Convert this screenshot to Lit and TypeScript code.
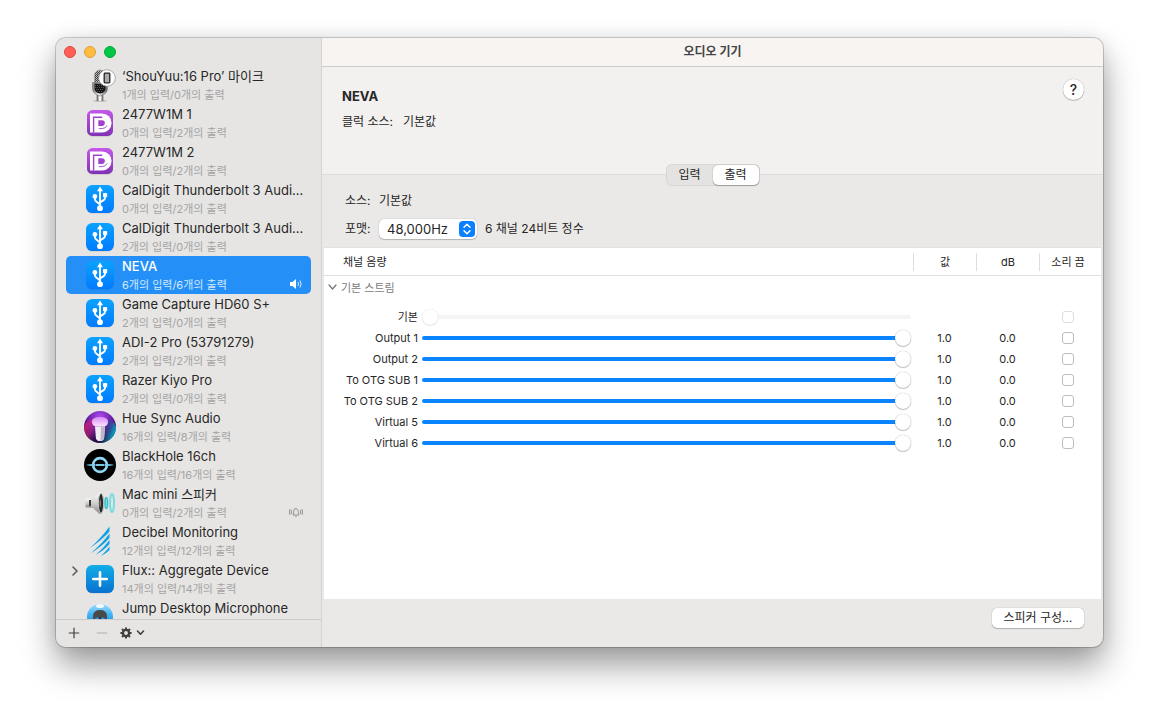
import { LitElement, html, css, svg, nothing } from "lit";
import { customElement, property, state } from "lit/decorators.js";
import { classMap } from "lit/directives/class-map.js";

type IconName =
  | "mic" | "displayport" | "usb" | "hue" | "blackhole"
  | "speaker" | "decibel" | "aggregate" | "jump";

interface Device {
  name: string;
  io?: string;
  icon: IconName;
  status?: "output" | "alert";
  expandable?: boolean;
}

interface Channel {
  id: string;
  label: string;
  level: number;
  value?: string;
  db?: string;
}

const DEVICES: Device[] = [
  { name: "‘ShouYuu:16 Pro’ 마이크", io: "1개의 입력/0개의 출력", icon: "mic" },
  { name: "2477W1M 1", io: "0개의 입력/2개의 출력", icon: "displayport" },
  { name: "2477W1M 2", io: "0개의 입력/2개의 출력", icon: "displayport" },
  { name: "CalDigit Thunderbolt 3 Audi…", io: "0개의 입력/2개의 출력", icon: "usb" },
  { name: "CalDigit Thunderbolt 3 Audi…", io: "2개의 입력/0개의 출력", icon: "usb" },
  { name: "NEVA", io: "6개의 입력/6개의 출력", icon: "usb", status: "output" },
  { name: "Game Capture HD60 S+", io: "2개의 입력/0개의 출력", icon: "usb" },
  { name: "ADI-2 Pro (53791279)", io: "2개의 입력/2개의 출력", icon: "usb" },
  { name: "Razer Kiyo Pro", io: "2개의 입력/0개의 출력", icon: "usb" },
  { name: "Hue Sync Audio", io: "16개의 입력/8개의 출력", icon: "hue" },
  { name: "BlackHole 16ch", io: "16개의 입력/16개의 출력", icon: "blackhole" },
  { name: "Mac mini 스피커", io: "0개의 입력/2개의 출력", icon: "speaker", status: "alert" },
  { name: "Decibel Monitoring", io: "12개의 입력/12개의 출력", icon: "decibel" },
  { name: "Flux:: Aggregate Device", io: "14개의 입력/14개의 출력", icon: "aggregate", expandable: true },
  { name: "Jump Desktop Microphone", icon: "jump" },
];

const CHANNELS: Channel[] = [
  { id: "master", label: "기본", level: 0 },
  { id: "out1", label: "Output 1", level: 1, value: "1.0", db: "0.0" },
  { id: "out2", label: "Output 2", level: 1, value: "1.0", db: "0.0" },
  { id: "otg1", label: "To OTG SUB 1", level: 1, value: "1.0", db: "0.0" },
  { id: "otg2", label: "To OTG SUB 2", level: 1, value: "1.0", db: "0.0" },
  { id: "virtual5", label: "Virtual 5", level: 1, value: "1.0", db: "0.0" },
  { id: "virtual6", label: "Virtual 6", level: 1, value: "1.0", db: "0.0" },
];

const FONT = css`Inter, "Noto Sans CJK KR", sans-serif`;

const ICONS = {
  usb: svg`
    <defs><linearGradient id="g" x2="0" y2="1"><stop stop-color="#0ba2ff"/><stop offset="1" stop-color="#007bff"/></linearGradient></defs>
    <rect x="2" y="2.6" width="28" height="28" rx="6.4" fill="#000" opacity=".13"/>
    <rect x="2" y="2" width="28" height="28" rx="6.4" fill="url(#g)"/>
    <g fill="none" stroke="#fff" stroke-width="1.9"><path d="M16 7v17M11 14v2.2q0 1.5 1.3 2.3L16 21.4M21 12.8v2q0 1.5-1.3 2.3L16 19.4"/></g>
    <g fill="#fff"><path d="M16 3.6l3 4.6h-6z"/><circle cx="16" cy="25.2" r="2.9"/><circle cx="10.9" cy="13.4" r="2.4"/><rect x="19" y="10" width="4.2" height="4.2" rx=".8"/></g>`,
  displayport: svg`
    <defs><linearGradient id="g" x2="0" y2="1"><stop stop-color="#c557ea"/><stop offset="1" stop-color="#8131b4"/></linearGradient></defs>
    <rect x="3" y="3.6" width="26" height="26" rx="5.6" fill="#000" opacity=".2"/>
    <rect x="3" y="3" width="26" height="26" rx="5.6" fill="url(#g)"/>
    <path d="M6 6.6h12.2a9.4 9.4 0 0 1 0 18.800H6z" fill="#fff"/>
    <path d="M9.600 25.500V10.300h8.600" fill="none" stroke="#a043cc" stroke-width="1.400"/>
    <path d="M14.300 13.300h3.700a2.800 2.800 0 0 1 0 5.600h-3.700z" fill="#a043cc"/><path d="M14.900 21.600h3q4 0 5.200-3.200" fill="none" stroke="#a043cc" stroke-width=".9"/>`,
  mic: svg`
    <defs>
      <pattern id="m" width="2" height="2" patternUnits="userSpaceOnUse"><rect width="2" height="2" fill="#444"/><rect width="1" height="1" fill="#c5c5c5"/><rect x="1" y="1" width="1" height="1" fill="#999"/></pattern>
      <linearGradient id="s"><stop stop-color="#777"/><stop offset=".4" stop-color="#f4f4f4"/><stop offset="1" stop-color="#666"/></linearGradient>
    </defs>
    <ellipse cx="16" cy="32" rx="7" ry="1" fill="#c2c2c2"/>
    <path d="M13.5 26v6M18.5 26v6" stroke="#777" stroke-width="1.8"/><path d="M16 26v6" stroke="#f2f2f2" stroke-width="2"/>
    <rect x="10.5" y="1" width="11" height="17" rx="5.5" fill="url(#m)" stroke="#999" stroke-width=".7"/>
    <path d="M8.5 13.5h15v6q0 4-3.5 5.7l-4 1.8-4-1.8q-3.5-1.7-3.5-5.7z" fill="url(#s)" stroke="#777" stroke-width=".6"/>
    <path d="M10.5 14.5h11v5q0 4.2-5.5 5-5.5-.8-5.5-5z" fill="#151515"/>
    <path d="M11 16.5h10M11 18.5h10M12 20.5h8M13 22.5h6" stroke="#888" stroke-width=".6" stroke-dasharray="1 1"/>
    <circle cx="23" cy="9" r="8.3" fill="#fff" stroke="#8c8c8c" stroke-width=".7"/>
    <rect x="20.2" y="4.2" width="5.6" height="9.6" rx=".8" fill="#aaa" stroke="#222" stroke-width="1.3"/>`,
  hue: svg`
    <defs>
      <radialGradient id="g" cx=".5" cy=".2" r=".8"><stop stop-color="#b04cf0"/><stop offset=".45" stop-color="#6a22a8"/><stop offset="1" stop-color="#1b0b38"/></radialGradient>
      <linearGradient id="l" x2="1" y2=".3"><stop stop-color="#ff1f6a" stop-opacity=".75"/><stop offset=".35" stop-color="#d02080" stop-opacity=".5"/><stop offset=".6" stop-color="#201050" stop-opacity="0"/><stop offset="1" stop-color="#00b5c8" stop-opacity=".8"/></linearGradient>
      <linearGradient id="b" x2="0" y2="1"><stop stop-color="#d98af8"/><stop offset="1" stop-color="#fbe6ff"/></linearGradient>
    </defs>
    <circle cx="16" cy="16" r="16" fill="url(#g)"/><path d="M0 16a16 16 0 0 0 32 0q-3-9-16-9T0 16z" fill="url(#l)"/>
    <path d="M8 10.5q0-4.500 8-4.500t8 4.500q0 3.800-3.500 5h-9Q8 14.300 8 10.500z" fill="url(#b)"/>
    <path d="M11 15.5h10l-1 12.500-2 2h-4l-2-2z" fill="#f0ecf4"/><path d="M17 15.500h4l-1 12.500-2 2h-1.500z" fill="#bdb8c6"/>`,
  blackhole: svg`
    <circle cx="16" cy="16" r="16" fill="#000"/>
    <circle cx="16" cy="16" r="6.9" fill="none" stroke="#90d8f5" stroke-width="2.6"/>
    <path d="M1.5 16q5-1.3 10-1h9q5-.3 10 1-5 1.3-10 1h-9q-5 .3-10-1z" fill="#78cdf2"/>
    <circle cx="16" cy="16" r="5" fill="#000"/><path d="M11.5 16h9" stroke="#8ed8f5" stroke-width="1.8"/>`,
  speaker: svg`
    <defs><linearGradient id="s" x2="0" y2="1"><stop stop-color="#fafafa"/><stop offset=".5" stop-color="#cfcfcf"/><stop offset="1" stop-color="#858585"/></linearGradient></defs>
    <path d="M6 11.5h3L15 6q1.500-.8 2.500 0v20.600q-1 .8-2.500 0L9 21H6z" fill="url(#s)"/>
    <rect x="1.5" y="11.5" width="5.5" height="9" rx="1.2" fill="url(#s)"/><rect x="5" y="13" width="2" height="6" fill="#3a3a3a"/>
    <ellipse cx="17" cy="16.3" rx="2.600" ry="10" fill="#292929" stroke="#c4c4c4" stroke-width="1"/>
    <ellipse cx="16.200" cy="16.300" rx=".9" ry="4" fill="#777"/>
    <ellipse cx="22.3" cy="16" rx="1.3" ry="5.6" fill="#8adfe3" stroke="#38c2c8" stroke-width="1.5"/>
    <ellipse cx="28" cy="16" rx="2" ry="9" fill="none" stroke="#79dde2" stroke-width="2"/>`,
  decibel: svg`
    <g fill="#13a0e4"><path d="M25.5 1.500Q18 12 5.500 23.500 19 14 25.500 6.500z"/><path d="M25.500 8.500Q18 18.500 6.500 28.500 19 20.500 25.500 13z"/><path d="M25.500 15Q20 22.500 11.500 30 20.500 25 25.500 19z"/><path d="M25.500 21.500Q22 26.500 17 31 22.500 28.500 25.500 25z"/></g>`,
  aggregate: svg`
    <defs><linearGradient id="g" x2="0" y2="1"><stop stop-color="#12ade8"/><stop offset="1" stop-color="#0872cf"/></linearGradient></defs>
    <rect x="2" y="2.6" width="28" height="28" rx="6.4" fill="#000" opacity=".12"/>
    <rect x="2" y="2" width="28" height="28" rx="6.4" fill="url(#g)"/>
    <path d="M16 9.3v13.4M9.3 16h13.4" stroke="#fff" stroke-width="2.6" stroke-linecap="round"/>`,
  jump: svg`
    <defs><linearGradient id="g" x2="0" y2="1"><stop stop-color="#9fdcfb"/><stop offset=".4" stop-color="#40b4f5"/><stop offset="1" stop-color="#1478d8"/></linearGradient></defs>
    <circle cx="16" cy="16" r="13" fill="url(#g)"/><ellipse cx="16" cy="5" rx="4" ry="2" fill="#fff" opacity=".85"/>
    <path d="M9 20v-5.500Q9.500 9 16 9t7 5.500V20z" fill="#4a4a4a"/><path d="M11.500 17q4.500-2 9 0v3h-9z" fill="#1d9cf0"/><path d="M14.500 16h3v4h-3z" fill="#333"/>`,
};

@customElement("device-icon")
class DeviceIcon extends LitElement {
  static styles = css`
    :host { display: block; width: 32px; height: 32px; }
    svg { display: block; width: 32px; height: 32px; overflow: visible; }
  `;
  @property() name: IconName = "usb";
  render() {
    return html`<svg viewBox="0 0 32 32" aria-hidden="true">${ICONS[this.name]}</svg>`;
  }
}

@customElement("device-row")
class DeviceRow extends LitElement {
  static styles = css`
    :host { display: block; }
    .row {
      display: grid;
      grid-template-columns: 18px 1fr;
      grid-template-rows: 38px;
      margin: 0 10px;
      border-radius: 5px;
    }
    .row.selected { background: #2490f7; }
    button {
      border: 0; padding: 0; background: none; color: inherit;
      font-family: ${FONT}; text-align: left;
    }
    .disclosure { grid-column: 1; height: 22px; display: grid; place-items: center; }
    .disclosure svg { width: 8px; height: 10px; }
    .device {
      grid-column: 2;
      display: flex; align-items: center; gap: 6px;
      min-width: 0; padding-right: 8px;
    }
    .text { box-sizing: border-box; flex: 1; min-width: 0; height: 38px; padding-top: 1px; }
    .name, .io { display: block; white-space: nowrap; }
    .name { font-size: 13px; line-height: 18px; color: #272727; }
    .io { font-size: 11px; line-height: 20px; color: #a5a4a3; }
    .selected .name { color: #fff; font-weight: 500; }
    .selected .io { color: #d4e8fd; }
    .status { width: 14px; height: 12px; align-self: flex-end; padding-bottom: 4px; }
  `;
  @property({ attribute: false }) device!: Device;
  @property({ type: Boolean }) selected = false;

  private status(kind?: string) {
    if (kind === "output") {
      return html`<svg class="status" viewBox="0 0 14 12" aria-hidden="true">
        <path d="M1 4h2.500L7 1v10L3.500 8H1z" fill="#fff"/>
        <path d="M9 4q1 2 0 4M11 2.500q2.200 3.500 0 7" fill="none" stroke="#d4e8fd" stroke-width="1"/></svg>`;
    }
    if (kind === "alert") {
      return html`<svg class="status" viewBox="0 0 14 12" aria-hidden="true" fill="none" stroke="#8a8988" stroke-width=".9">
        <path d="M3.800 9h6.400Q9.200 8 9.200 5.500T7 2.500 4.800 5.500 3.800 9zM6.200 10.300h1.600M2.700 4q-.8 2 0 4M11.300 4q.8 2 0 4M1 3q-1 3 0 6M13 3q1 3 0 6"/></svg>`;
    }
    return nothing;
  }

  render() {
    const d = this.device;
    return html`
      <div class=${classMap({ row: true, selected: this.selected })}>
        ${d.expandable
          ? html`<button class="disclosure" aria-label="펼치기"><svg viewBox="0 0 8 10"><path d="M2 1l4 4-4 4" fill="none" stroke="#555" stroke-width="1.5" stroke-linecap="round" stroke-linejoin="round"/></svg></button>`
          : nothing}
        <button class="device" aria-pressed=${this.selected ? "true" : "false"}>
          <device-icon name=${d.icon}></device-icon>
          <span class="text">
            <span class="name">${d.name}</span>
            ${d.io ? html`<span class="io">${d.io}</span>` : nothing}
          </span>
          ${this.status(d.status)}
        </button>
      </div>`;
  }
}

@customElement("channel-table")
class ChannelTable extends LitElement {
  static styles = css`
    :host { display: block; background: #fff; font-family: ${FONT}; font-size: 11px; color: #262626; overflow: hidden; border-top: 1px solid #e2e1e0; }
    table { width: 100%; border-collapse: collapse; table-layout: fixed; }
    th, td { padding: 0; text-align: center; font-weight: 400; }
    thead th { height: 27px; border-bottom: 1px solid #e0e0e0; }
    thead span { display: block; line-height: 18px; border-left: 1px solid #dedede; }
    thead th:first-child span { border-left: 0; text-align: left; padding-left: 19px; }
    .c-label { width: 98px; }
    .c-num { width: 63px; }
    .c-mute { width: 62px; }
    .group th { height: 30px; text-align: left; vertical-align: top; color: #7b7b7b; }
    .group button {
      display: flex; align-items: center; gap: 4px; height: 22px; padding: 0 0 0 4px;
      border: 0; background: none; font: inherit; color: inherit;
    }
    .group svg { width: 9px; height: 6px; }
    tbody td, .channel th { height: 21px; line-height: 16px; }
    .channel th { text-align: right; padding-right: 4px; white-space: nowrap; }
    .slider { padding-right: 2px; }
    input { display: block; margin: 0; appearance: none; -webkit-appearance: none; }
    input[type="range"] { width: 100%; height: 16px; background: none; }
    input[type="range"]::-webkit-slider-runnable-track { height: 4px; border-radius: 2px; background: #0a84ff; }
    input[type="range"]:disabled::-webkit-slider-runnable-track { background: #f5f5f5; }
    input[type="range"]::-webkit-slider-thumb {
      -webkit-appearance: none; width: 16px; height: 16px; margin-top: -6px;
      border-radius: 50%; background: #fff; box-shadow: 0 0 1px rgba(0,0,0,.35), 0 1px 1px rgba(0,0,0,.22);
    }
    input[type="range"]:disabled::-webkit-slider-thumb { box-shadow: 0 0 1px rgba(0,0,0,.2), 0 1px 1px rgba(0,0,0,.08); }
    input[type="checkbox"] {
      box-sizing: border-box; width: 12px; height: 12px; margin: 0 auto;
      border: 1px solid #bdbdbd; border-radius: 3px; background: #fff;
    }
    input[type="checkbox"]:checked { background: #0a84ff; border-color: #0a84ff; }
    input[type="checkbox"]:disabled { border-color: #dedede; }
    .mute { padding-right: 5px; }
    thead .mute { padding-right: 0; }
    thead .mute span { padding-right: 5px; }
  `;

  render() {
    return html`
      <table>
        <colgroup><col class="c-label"><col><col class="c-num"><col class="c-num"><col class="c-mute"></colgroup>
        <thead><tr>
          <th colspan="2" scope="col"><span>채널 음량</span></th>
          <th scope="col"><span>값</span></th>
          <th scope="col"><span>dB</span></th>
          <th scope="col" class="mute"><span>소리 끔</span></th>
        </tr></thead>
        <tbody>
          <tr class="group"><th colspan="5"><button>
            <svg viewBox="0 0 9 6" aria-hidden="true"><path d="M1 1l3.5 4L8 1" fill="none" stroke="#777" stroke-width="1.3" stroke-linecap="round" stroke-linejoin="round"/></svg>
            기본 스트림</button></th></tr>
          ${CHANNELS.map((c) => {
            const off = c.value === undefined;
            return html`<tr class="channel">
              <th scope="row"><label for=${c.id}>${c.label}</label></th>
              <td class="slider"><input id=${c.id} type="range" min="0" max="1" step="0.01" .value=${String(c.level)} ?disabled=${off}></td>
              <td>${c.value ?? nothing}</td>
              <td>${c.db ?? nothing}</td>
              <td class="mute"><input type="checkbox" aria-label="소리 끔" ?disabled=${off}></td>
            </tr>`;
          })}
        </tbody>
      </table>`;
  }
}

@customElement("app-root")
class AppRoot extends LitElement {
  static styles = css`
    :host {
      display: flex; box-sizing: border-box; height: 100vh;
      padding: 38px 56px 74px; background: #fff;
      font-family: ${FONT}; font-size: 12px; color: #262626;
    }
    * { box-sizing: border-box; }
    .window {
      flex: 1; min-width: 0; display: grid; grid-template-columns: 266px 1fr;
      border-radius: 10px; overflow: hidden; background: #eae9e7;
      box-shadow: 0 0 0 1px rgba(0,0,0,.18), 0 18px 34px rgba(0,0,0,.4), 0 0 16px rgba(0,0,0,.08);
    }
    button, select { font-family: inherit; color: inherit; }
    .sidebar { display: flex; flex-direction: column; min-height: 0; background: #e6e5e3; border-right: 1px solid #d4d3d1; }
    .lights { display: flex; gap: 8px; padding: 8px; }
    .light { width: 12px; height: 12px; padding: 0; border: 1px solid; border-radius: 50%; }
    .close { background: #ff5f57; border-color: #e14640; }
    .minimize { background: #febc40; border-color: #dfa033; }
    .zoom { background: #02c645; border-color: #02ab34; }
    .devices { flex: 1; min-height: 0; margin: 0; padding: 0; list-style: none; overflow-y: auto; scrollbar-width: none; }
    .tools { display: flex; align-items: center; justify-content: flex-start; height: 28px; border-top: 1px solid #cbcac8; padding: 0 12px 2px; }
    .tools button { display: flex; align-items: center; gap: 4px; padding: 0; margin-right: 16px; border: 0; background: none; color: #3f3f3f; }
    .tools button:disabled { color: #b0afae; margin-right: 12px; }
    .tools svg { display: block; }
    .main { display: flex; flex-direction: column; min-width: 0; min-height: 0; }
    .titlebar { height: 29px; background: #f7f4f2; border-bottom: 1px solid #cfcdcb; display: grid; place-items: center; }
    .titlebar h1 { margin: 0; font-size: 12px; line-height: 20px; font-weight: 600; color: #444; }
    .summary { display: flex; justify-content: space-between; align-items: flex-start; height: 107px; padding: 12px 19px 0 20px; background: #f2f1ef; }
    .summary h2 { margin: 7px 0 8px; font-size: 13px; line-height: 20px; font-weight: 700; }
    .clock { display: flex; gap: 10px; margin: 0; line-height: 16px; }
    .help { width: 21px; height: 21px; padding: 0; border: 0; border-radius: 50%; background: #fff; font-size: 14px; font-weight: 500; line-height: 21px; box-shadow: 0 0 1px rgba(0,0,0,.4), 0 1px 1px rgba(0,0,0,.2); }
    .panel { flex: 1; min-height: 0; display: flex; flex-direction: column; padding: 0 2px; border-top: 1px solid #dddcda; }
    .segments { display: flex; align-self: center; height: 22px; margin-top: -11px; padding: 0 1px; background: #e4e3e1; border-radius: 6px; box-shadow: inset 0 0 0 1px #d8d7d5; }
    .segments button { width: 46px; height: 20px; margin: 1px 0; padding: 0; border: 0; border-radius: 5px; background: none; font-size: 12px; line-height: 20px; }
    .segments .active { background: #fff; box-shadow: 0 0 1px rgba(0,0,0,.4), 0 1px 1px rgba(0,0,0,.25); }
    .settings { display: grid; grid-template-columns: 34px 1fr; align-items: center; row-gap: 8px; padding: 5px 21px 8px; }
    .settings > * { line-height: 20px; }
    .format { display: flex; align-items: center; gap: 8px; }
    .picker { position: relative; display: block; height: 20px; }
    .picker select {
      appearance: none; -webkit-appearance: none; display: block; width: 98px; height: 20px; padding: 0 22px 0 8px;
      border: 0; border-radius: 5px; background: #fff; font-size: 13px; line-height: 20px;
      box-shadow: 0 0 1px rgba(0,0,0,.4), 0 1px 1px rgba(0,0,0,.2);
    }
    .picker svg { position: absolute; top: 2px; right: 2px; width: 16px; height: 16px; pointer-events: none; }
    channel-table { flex: 1; min-height: 0; }
    .actions { display: flex; justify-content: flex-end; height: 48px; padding: 9px 17px 0; }
    .actions button { height: 20px; width: 92px; padding: 0; border: 0; border-radius: 5px; background: #fff; font-size: 12px; line-height: 18px; box-shadow: 0 0 1px rgba(0,0,0,.4), 0 1px 1px rgba(0,0,0,.22); }
  `;

  @state() private selected = 5;
  @state() private direction: "in" | "out" = "out";

  render() {
    return html`
      <div class="window">
        <aside class="sidebar">
          <div class="lights">
            <button class="light close" aria-label="닫기"></button>
            <button class="light minimize" aria-label="최소화"></button>
            <button class="light zoom" aria-label="확대"></button>
          </div>
          <ul class="devices">
            ${DEVICES.map((d, i) => html`<li><device-row .device=${d} ?selected=${i === this.selected} @click=${() => (this.selected = i)}></device-row></li>`)}
          </ul>
          <div class="tools">
            <button aria-label="추가"><svg width="12" height="12" viewBox="0 0 12 12"><path d="M6 .8v10.4M.8 6h10.4" stroke="currentColor" stroke-width="1.2"/></svg></button>
            <button aria-label="제거" disabled><svg width="12" height="12" viewBox="0 0 12 12"><path d="M.8 6h10.4" stroke="currentColor" stroke-width="1"/></svg></button>
            <button aria-label="동작">
              <svg width="12" height="12" viewBox="0 0 12 12"><circle cx="6" cy="6" r="3.1" fill="none" stroke="currentColor" stroke-width="2.4"/><g stroke="currentColor" stroke-width="2"><path d="M6 .4v1.8M6 9.800v1.800M.4 6h1.800M9.800 6h1.800M2 2l1.400 1.400M8.600 8.600L10 10M2 10l1.400-1.400M8.600 3.400L10 2"/></g></svg>
              <svg width="9" height="6" viewBox="0 0 9 6"><path d="M1.5 1l3 3.2L7.500 1" fill="none" stroke="currentColor" stroke-width="1.6" stroke-linecap="round" stroke-linejoin="round"/></svg>
            </button>
          </div>
        </aside>
        <main class="main">
          <header class="titlebar"><h1>오디오 기기</h1></header>
          <section class="summary">
            <div>
              <h2>NEVA</h2>
              <p class="clock"><span>클럭 소스:</span><span>기본값</span></p>
            </div>
            <button class="help" aria-label="도움말">?</button>
          </section>
          <section class="panel">
            <div class="segments" role="group" aria-label="방향">
              <button class=${classMap({ active: this.direction === "in" })} @click=${() => (this.direction = "in")}>입력</button>
              <button class=${classMap({ active: this.direction === "out" })} @click=${() => (this.direction = "out")}>출력</button>
            </div>
            <div class="settings">
              <span>소스:</span><span>기본값</span>
              <label for="format">포맷:</label>
              <div class="format">
                <span class="picker">
                  <select id="format"><option>48,000Hz</option></select>
                  <svg viewBox="0 0 16 16" aria-hidden="true"><rect width="16" height="16" rx="4" fill="#0a80ff"/><path d="M5 6.3l3-3 3 3M5 9.700l3 3 3-3" fill="none" stroke="#fff" stroke-width="1.5" stroke-linecap="round" stroke-linejoin="round"/></svg>
                </span>
                <span>6 채널 24비트 정수</span>
              </div>
            </div>
            <channel-table></channel-table>
            <div class="actions"><button>스피커 구성…</button></div>
          </section>
        </main>
      </div>`;
  }
}
